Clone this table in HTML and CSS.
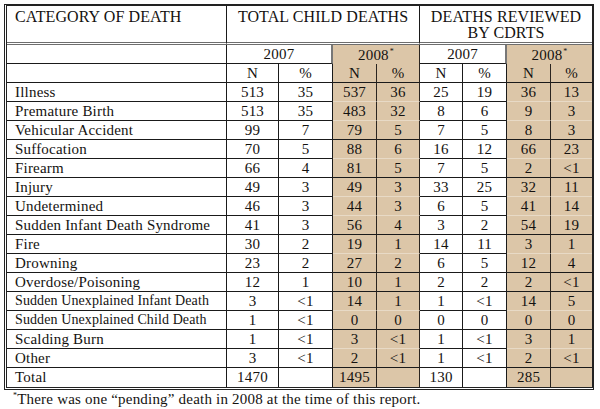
FILE: index.html
```html
<!DOCTYPE html>
<html>
<head>
<meta charset="utf-8">
<link rel="stylesheet" href="styles.css">
</head>
<body>
<div class="page">
<table class="deaths">
  <colgroup>
    <col class="c-cat"><col class="c-n1"><col class="c-p1"><col class="c-n2"><col class="c-p2"><col class="c-n3"><col class="c-p3"><col class="c-n4"><col class="c-p4">
  </colgroup>
  <thead>
    <tr class="h1">
      <th class="cat-head">CATEGORY OF DEATH</th>
      <th colspan="4" class="grp">TOTAL CHILD DEATHS</th>
      <th colspan="4" class="grp last">DEATHS REVIEWED<br>BY CDRTS</th>
    </tr>
    <tr class="h2">
      <th class="blank"></th>
      <th colspan="2" class="yr">2007</th>
      <th colspan="2" class="yr tan tan-start">2008<sup>*</sup></th>
      <th colspan="2" class="yr">2007</th>
      <th colspan="2" class="yr tan tan-start last">2008<sup>*</sup></th>
    </tr>
    <tr class="h3">
      <th class="blank"></th>
      <th>N</th><th>%</th>
      <th class="tan">N</th><th class="tan">%</th>
      <th>N</th><th>%</th>
      <th class="tan">N</th><th class="tan last">%</th>
    </tr>
  </thead>
  <tbody>
    <tr class="soft"><td class="cat">Illness</td><td>513</td><td>35</td><td class="tan">537</td><td class="tan">36</td><td>25</td><td>19</td><td class="tan">36</td><td class="tan last">13</td></tr>
    <tr class="soft"><td class="cat">Premature Birth</td><td>513</td><td>35</td><td class="tan">483</td><td class="tan">32</td><td>8</td><td>6</td><td class="tan">9</td><td class="tan last">3</td></tr>
    <tr><td class="cat">Vehicular Accident</td><td>99</td><td>7</td><td class="tan">79</td><td class="tan">5</td><td>7</td><td>5</td><td class="tan">8</td><td class="tan last">3</td></tr>
    <tr class="soft"><td class="cat">Suffocation</td><td>70</td><td>5</td><td class="tan">88</td><td class="tan">6</td><td>16</td><td>12</td><td class="tan">66</td><td class="tan last">23</td></tr>
    <tr><td class="cat">Firearm</td><td>66</td><td>4</td><td class="tan">81</td><td class="tan">5</td><td>7</td><td>5</td><td class="tan">2</td><td class="tan last">&lt;1</td></tr>
    <tr class="soft"><td class="cat">Injury</td><td>49</td><td>3</td><td class="tan">49</td><td class="tan">3</td><td>33</td><td>25</td><td class="tan">32</td><td class="tan last">11</td></tr>
    <tr class="soft"><td class="cat">Undetermined</td><td>46</td><td>3</td><td class="tan">44</td><td class="tan">3</td><td>6</td><td>5</td><td class="tan">41</td><td class="tan last">14</td></tr>
    <tr><td class="cat">Sudden Infant Death Syndrome</td><td>41</td><td>3</td><td class="tan">56</td><td class="tan">4</td><td>3</td><td>2</td><td class="tan">54</td><td class="tan last">19</td></tr>
    <tr class="soft"><td class="cat">Fire</td><td>30</td><td>2</td><td class="tan">19</td><td class="tan">1</td><td>14</td><td>11</td><td class="tan">3</td><td class="tan last">1</td></tr>
    <tr><td class="cat">Drowning</td><td>23</td><td>2</td><td class="tan">27</td><td class="tan">2</td><td>6</td><td>5</td><td class="tan">12</td><td class="tan last">4</td></tr>
    <tr><td class="cat">Overdose/Poisoning</td><td>12</td><td>1</td><td class="tan">10</td><td class="tan">1</td><td>2</td><td>2</td><td class="tan">2</td><td class="tan last">&lt;1</td></tr>
    <tr class="soft"><td class="cat small">Sudden Unexplained Infant Death</td><td>3</td><td>&lt;1</td><td class="tan">14</td><td class="tan">1</td><td>1</td><td>&lt;1</td><td class="tan">14</td><td class="tan last">5</td></tr>
    <tr><td class="cat small">Sudden Unexplained Child Death</td><td>1</td><td>&lt;1</td><td class="tan">0</td><td class="tan">0</td><td>0</td><td>0</td><td class="tan">0</td><td class="tan last">0</td></tr>
    <tr class="soft"><td class="cat">Scalding Burn</td><td>1</td><td>&lt;1</td><td class="tan">3</td><td class="tan">&lt;1</td><td>1</td><td>&lt;1</td><td class="tan">3</td><td class="tan last">1</td></tr>
    <tr><td class="cat">Other</td><td>3</td><td>&lt;1</td><td class="tan">2</td><td class="tan">&lt;1</td><td>1</td><td>&lt;1</td><td class="tan">2</td><td class="tan last">&lt;1</td></tr>
    <tr class="total"><td class="cat">Total</td><td>1470</td><td></td><td class="tan">1495</td><td class="tan"></td><td>130</td><td></td><td class="tan">285</td><td class="tan last"></td></tr>
  </tbody>
</table>
<p class="note"><sup>*</sup>There was one “pending” death in 2008 at the time of this report.</p>
</div>
</body>
</html>
```
FILE: styles.css
```css
html, body {
  margin: 0;
  padding: 0;
  background: #ffffff;
}
body {
  font-family: "Liberation Serif", "Times New Roman", serif;
  color: #141210;
}
.page {
  padding: 4px 0 0 4px;
}
.deaths {
  table-layout: fixed;
  width: 590px;
  border-collapse: separate;
  border-spacing: 0;
  border-top: 2px solid #222;
  border-left: 3px double #222;
  border-right: 2px solid #222;
  border-bottom: 3px double #222;
}
.c-cat { width: 220px; }
.c-n1 { width: 52px; }
.c-p1 { width: 54px; }
.c-n2 { width: 44px; }
.c-p2 { width: 43px; }
.c-n3 { width: 43px; }
.c-p3 { width: 44px; }
.c-n4 { width: 44px; }
.c-p4 { width: 41px; }

.deaths th, .deaths td {
  box-sizing: border-box;
  padding: 0;
  border-right: 1px solid #1a1a1a;
  border-bottom: 1px solid #1a1a1a;
  text-align: center;
  font-weight: normal;
  font-size: 15px;
  line-height: 18px;
  letter-spacing: 0.2px;
  white-space: nowrap;
  overflow: hidden;
}
.deaths .last {
  border-right: none;
}
.h1 { height: 39px; }
.h1 th {
  vertical-align: top;
  padding-top: 3px;
  font-size: 16px;
  line-height: 16px;
  letter-spacing: 0.1px;
  border-bottom: 3px double #6e6e6e;
}
.h1 .cat-head {
  text-align: left;
  padding-left: 8px;
}
.h2 { height: 19px; }
.h3 { height: 19px; }
.deaths tbody tr { height: 18.75px; }

.deaths .cat {
  text-align: left;
  padding-left: 8px;
}
.deaths .cat.small {
  font-size: 14px;
  letter-spacing: 0.1px;
}
.deaths .tan {
  background: #dcc6a8;
}
.deaths .tan-start {
  border-left: 2px solid #7a7a7a;
}
.h2 .tan-start { border-left: none; }
.h2 th:nth-child(2), .h2 th:nth-child(4) {
  border-right: 2px solid #777;
}
.h2 .tan { border-bottom: none; }
.deaths tr.soft .tan {
  border-bottom-color: #e8dac6;
}
.deaths .tan:not(.last) { border-right-color: #2a2520; }
.deaths sup {
  font-size: 8px;
  line-height: 0;
  vertical-align: 6px;
  margin-left: 1px;
}
.deaths .total td { border-bottom: none; }
.note {
  margin: 0;
  padding-left: 9px;
  font-size: 15px;
  line-height: 18px;
  letter-spacing: 0.2px;
}
.note sup {
  font-size: 8px;
  line-height: 0;
  vertical-align: 6px;
}
```
